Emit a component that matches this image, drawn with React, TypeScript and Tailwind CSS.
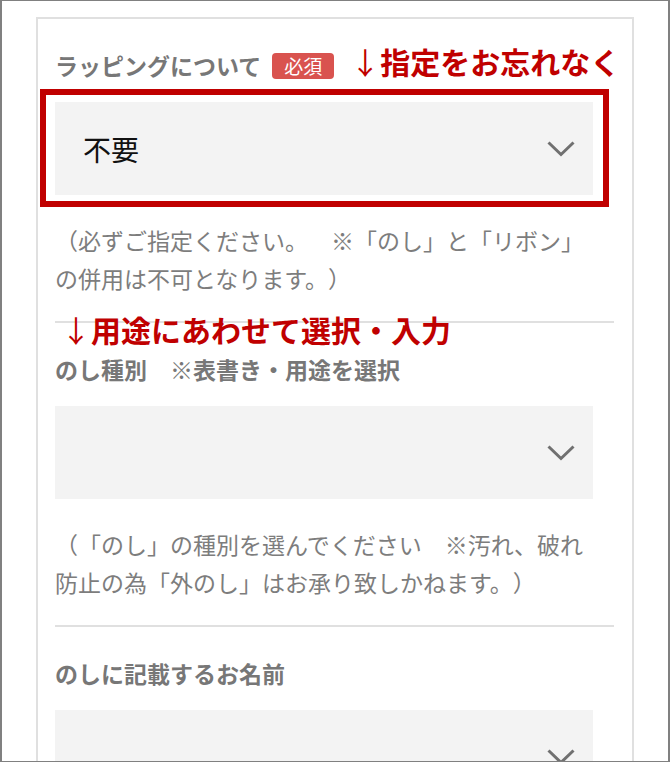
import type { ReactNode } from "react";

const FONT = { fontFamily: '"Noto Sans CJK JP", "Noto Sans", sans-serif' };

function Chevron() {
  return (
    <svg width="28" height="16" viewBox="0 0 28 16" fill="none" className="shrink-0">
      <path d="M1.5 1.5 L14 13.5 L26.5 1.5" stroke="#707070" strokeWidth="3" />
    </svg>
  );
}

function SelectBox({ value, highlight }: { value?: string; highlight?: boolean }) {
  return (
    <div className="relative mt-[20px] w-[538px]">
      {highlight && (
        <div className="absolute -left-[15px] -top-[13px] -right-[16px] -bottom-[12px] border-[6px] border-[#c00000]" />
      )}
      <div className="flex h-[93px] items-center justify-between bg-[#f3f3f3] pl-[28px] pr-[18px]">
        <span className="text-[28px] leading-none text-[#111]">{value}</span>
        <Chevron />
      </div>
    </div>
  );
}

function Label({ children }: { children: ReactNode }) {
  return (
    <div className="flex h-[33px] items-center whitespace-nowrap text-[23px] font-bold leading-[33px] text-[#777]">
      {children}
    </div>
  );
}

function Note({ children }: { children: ReactNode }) {
  return <p className="mt-[26px] w-[538px] text-[23px] leading-[38px] text-[#7d7d7d]">{children}</p>;
}

function Divider() {
  return <div className="h-[2px] bg-[#e0e0e0]" />;
}

export default function App() {
  return (
    <div
      style={FONT}
      className="h-[762px] w-[670px] overflow-hidden border-x-2 border-y border-[#808080] bg-white [text-spacing-trim:space-all]"
    >
      <div className="ml-[34px] mt-[16px] w-[598px] border-2 border-[#e0e0e0] pl-[17px] pr-[18px]">
        <section className="pt-[30px] pb-[24px]">
          <Label>
            <span className="shrink-0">ラッピングについて</span>
            <span className="ml-[11px] flex h-[26px] w-[62px] shrink-0 items-center justify-center rounded-[4px] bg-[#d9534f] text-[19px] font-normal leading-none text-white">
              必須
            </span>
            <span className="relative -top-[5px] ml-[16px] shrink-0 text-[30px] leading-[30px] text-[#c00000]">
              <span className="font-normal">↓</span>指定をお忘れなく
            </span>
          </Label>
          <SelectBox value="不要" highlight />
          <Note>（必ずご指定ください。　※「のし」と「リボン」の併用は不可となります。）</Note>
        </section>
        <Divider />
        <section className="relative pt-[30px] pb-[24px]">
          <div className="absolute -top-[9px] left-[6px] whitespace-nowrap text-[30px] font-bold leading-[30px] text-[#c00000]">
            <span className="font-normal">↓</span>用途にあわせて選択・入力
          </div>
          <Label>のし種別　※表書き・用途を選択</Label>
          <SelectBox />
          <Note>（「のし」の種別を選んでください　※汚れ、破れ防止の為「外のし」はお承り致しかねます。）</Note>
        </section>
        <Divider />
        <section className="pt-[30px]">
          <Label>のしに記載するお名前</Label>
          <SelectBox />
        </section>
      </div>
    </div>
  );
}
